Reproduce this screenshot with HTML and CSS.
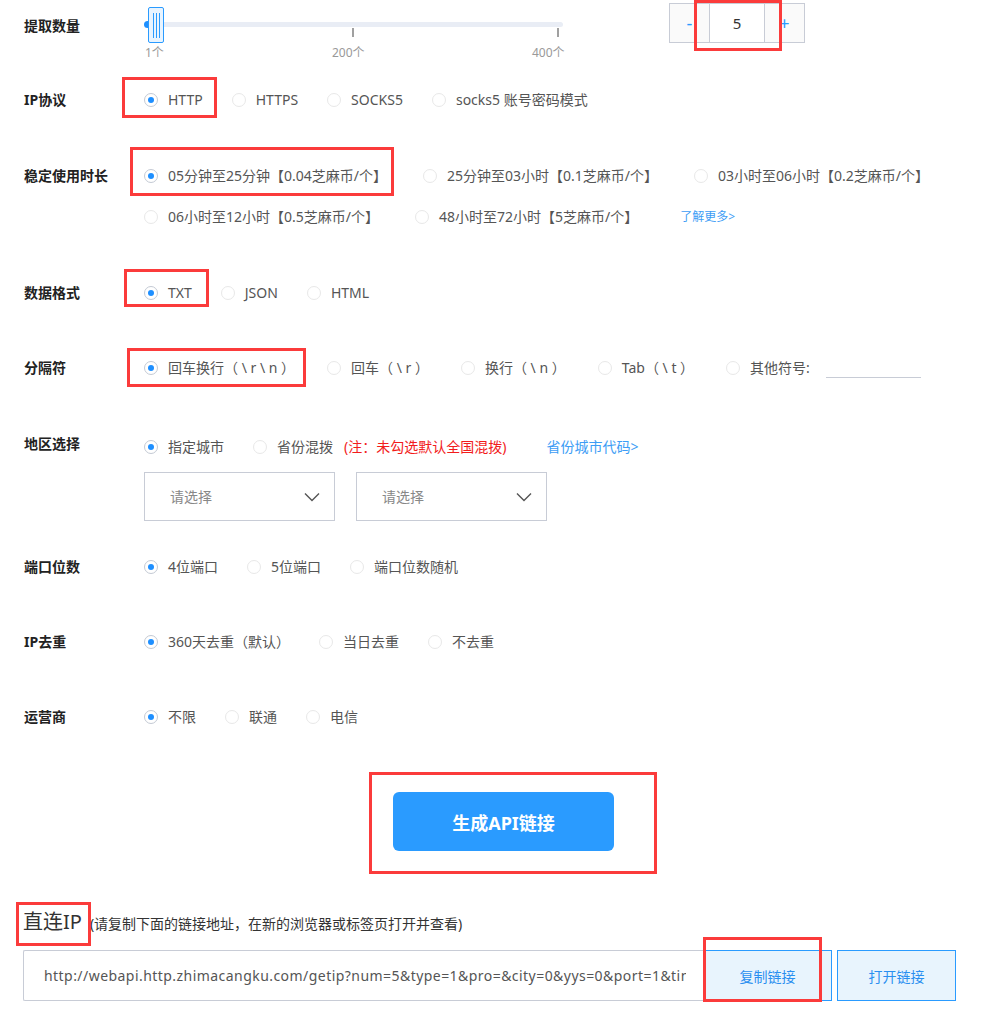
FILE: index.html
```html
<!DOCTYPE html>
<html lang="zh-CN">
<head>
<meta charset="utf-8">
<title>提取IP</title>
<link rel="stylesheet" href="styles.css">
</head>
<body>
<div class="page">

  <div class="row row-slider">
    <div class="label label-slider">提取数量</div>
    <div class="slider">
      <div class="track"></div>
      <div class="track-dot"></div>
      <div class="tick tick-200"></div>
      <div class="tick tick-400"></div>
      <div class="handle"><span></span><span></span><span></span></div>
      <div class="scale scale-1">1个</div>
      <div class="scale scale-200">200个</div>
      <div class="scale scale-400">400个</div>
    </div>
    <div class="stepper">
      <div class="step-btn">-</div>
      <div class="step-val">5</div>
      <div class="step-btn">+</div>
    </div>
  </div>

  <div class="row row-ip">
    <div class="label">IP协议</div>
    <div class="opts">
      <span class="radio on"><i class="circle"></i>HTTP</span>
      <span class="radio"><i class="circle"></i>HTTPS</span>
      <span class="radio"><i class="circle"></i>SOCKS5</span>
      <span class="radio"><i class="circle"></i>socks5 账号密码模式</span>
    </div>
  </div>

  <div class="row row-duration">
    <div class="label">稳定使用时长</div>
    <div class="opts-col">
      <div class="opts opts-wide">
        <span class="radio on"><i class="circle"></i>05分钟至25分钟【0.04芝麻币/个】</span>
        <span class="radio"><i class="circle"></i>25分钟至03小时【0.1芝麻币/个】</span>
        <span class="radio"><i class="circle"></i>03小时至06小时【0.2芝麻币/个】</span>
      </div>
      <div class="opts opts-wide">
        <span class="radio"><i class="circle"></i>06小时至12小时【0.5芝麻币/个】</span>
        <span class="radio"><i class="circle"></i>48小时至72小时【5芝麻币/个】</span>
        <a class="link link-small">了解更多&gt;</a>
      </div>
    </div>
  </div>

  <div class="row row-format">
    <div class="label">数据格式</div>
    <div class="opts">
      <span class="radio on"><i class="circle"></i>TXT</span>
      <span class="radio"><i class="circle"></i>JSON</span>
      <span class="radio"><i class="circle"></i>HTML</span>
    </div>
  </div>

  <div class="row row-sep">
    <div class="label">分隔符</div>
    <div class="opts opts-sep">
      <span class="radio on"><i class="circle"></i>回车换行（ \ r \ n ）</span>
      <span class="radio"><i class="circle"></i>回车（ \ r ）</span>
      <span class="radio"><i class="circle"></i>换行（ \ n ）</span>
      <span class="radio"><i class="circle"></i>Tab（ \ t ）</span>
      <span class="radio"><i class="circle"></i>其他符号:<span class="line-input"></span></span>
    </div>
  </div>

  <div class="row row-region">
    <div class="label">地区选择</div>
    <div class="region-body">
      <div class="opts">
        <span class="radio on"><i class="circle"></i>指定城市</span>
        <span class="radio"><i class="circle"></i>省份混拨<span class="note">(注：未勾选默认全国混拨)</span><a class="link link-code">省份城市代码&gt;</a></span>
      </div>
      <div class="selects">
        <div class="select"><span>请选择</span>
          <svg class="chev" width="16" height="10" viewBox="0 0 16 10"><polyline points="1,1.5 8,8.5 15,1.5" fill="none" stroke="#555" stroke-width="1.4"/></svg>
        </div>
        <div class="select"><span>请选择</span>
          <svg class="chev" width="16" height="10" viewBox="0 0 16 10"><polyline points="1,1.5 8,8.5 15,1.5" fill="none" stroke="#555" stroke-width="1.4"/></svg>
        </div>
      </div>
    </div>
  </div>

  <div class="row row-port">
    <div class="label">端口位数</div>
    <div class="opts">
      <span class="radio on"><i class="circle"></i>4位端口</span>
      <span class="radio"><i class="circle"></i>5位端口</span>
      <span class="radio"><i class="circle"></i>端口位数随机</span>
    </div>
  </div>

  <div class="row row-dedupe">
    <div class="label">IP去重</div>
    <div class="opts">
      <span class="radio on"><i class="circle"></i>360天去重（默认）</span>
      <span class="radio"><i class="circle"></i>当日去重</span>
      <span class="radio"><i class="circle"></i>不去重</span>
    </div>
  </div>

  <div class="row row-isp">
    <div class="label">运营商</div>
    <div class="opts">
      <span class="radio on"><i class="circle"></i>不限</span>
      <span class="radio"><i class="circle"></i>联通</span>
      <span class="radio"><i class="circle"></i>电信</span>
    </div>
  </div>

  <div class="gen-btn">生成API链接</div>

  <div class="direct-head">
    <span class="direct-title">直连IP</span><span class="direct-sub">(请复制下面的链接地址，在新的浏览器或标签页打开并查看)</span>
  </div>

  <div class="url-row">
    <input class="url-box" type="text" readonly value="http://webapi.http.zhimacangku.com/getip?num=5&amp;type=1&amp;pro=&amp;city=0&amp;yys=0&amp;port=1&amp;time=1&amp;ts=0&amp;ys=0&amp;cs=0&amp;lb=1&amp;sb=0&amp;pb=4&amp;mr=1&amp;regions=">
    <div class="url-btn url-copy">复制链接</div>
    <div class="url-btn url-open">打开链接</div>
  </div>

  <div class="mark mark-stepper"></div>
  <div class="mark mark-http"></div>
  <div class="mark mark-duration"></div>
  <div class="mark mark-txt"></div>
  <div class="mark mark-sep"></div>
  <div class="mark mark-btn"></div>
  <div class="mark mark-direct"></div>
  <div class="mark mark-copy"></div>
</div>
</body>
</html>
```

FILE: styles.css
```css
html, body {
  margin: 0;
  padding: 0;
  background: #fff;
}
body {
  font-family: "Noto Sans", "Noto Sans CJK SC", sans-serif;
  font-size: 14px;
  color: #555;
}
.page {
  position: relative;
  width: 983px;
  height: 1015px;
  overflow: hidden;
}
.row {
  display: flex;
  align-items: flex-start;
  padding-left: 24px;
}
.label {
  width: 120px;
  flex: none;
  font-weight: bold;
  color: #222;
  line-height: 20px;
}
.opts {
  display: flex;
  align-items: center;
  gap: 29px;
  line-height: 20px;
  white-space: nowrap;
}
.opts-wide { gap: 36px; }
.opts-sep { gap: 32px; }
.opts-col {
  display: flex;
  flex-direction: column;
  gap: 21px;
}
.radio {
  display: inline-flex;
  align-items: center;
  white-space: nowrap;
}
.circle {
  position: relative;
  width: 14px;
  height: 14px;
  box-sizing: border-box;
  border: 1px solid #e8e8e8;
  border-radius: 50%;
  background: #fff;
  margin-right: 10px;
  flex: none;
}
.radio.on .circle { border-color: #c4cad4; }
.radio.on .circle::after {
  content: "";
  position: absolute;
  left: 3px;
  top: 3px;
  width: 6px;
  height: 6px;
  border-radius: 50%;
  background: #1e8fff;
}
.link {
  color: #3d9df5;
  text-decoration: none;
}
.link-small { font-size: 12px; margin-left: 6px; }
.link-code { margin-left: 40px; }
.note {
  color: #f21c1c;
  margin-left: 11px;
}

/* slider row */
.row-slider { height: 62px; }
.label-slider { margin-top: 16px; }
.slider {
  position: relative;
  width: 423px;
  height: 62px;
  flex: none;
}
.track {
  position: absolute;
  left: 2px;
  top: 22px;
  width: 417px;
  height: 5px;
  border-radius: 3px;
  background: #e9edf5;
}
.track-dot {
  position: absolute;
  left: 0;
  top: 21px;
  width: 7px;
  height: 7px;
  border-radius: 50%;
  background: #1e8fff;
}
.tick {
  position: absolute;
  top: 28px;
  width: 2px;
  height: 9px;
  background: #a0a0a0;
}
.tick-200 { left: 208px; }
.tick-400 { left: 413px; }
.handle {
  position: absolute;
  left: 4px;
  top: 7px;
  width: 16px;
  height: 36px;
  box-sizing: border-box;
  border: 1px solid #2a9bff;
  border-radius: 2px;
  background: #e8f4ff;
  display: flex;
  justify-content: center;
  align-items: center;
  gap: 2px;
}
.handle span {
  width: 1px;
  height: 25px;
  background: #2a9bff;
}
.scale {
  position: absolute;
  top: 44px;
  font-size: 12px;
  line-height: 18px;
  color: #999;
}
.scale-1 { left: 1px; }
.scale-200 { left: 188px; }
.scale-400 { left: 388px; }

.stepper {
  display: flex;
  margin-left: 102px;
  margin-top: 3px;
  height: 40px;
  box-sizing: border-box;
  border: 1px solid #c8ccd6;
}
.step-btn {
  width: 39px;
  background: #fafafa;
  color: #2a9bff;
  font-size: 18px;
  display: flex;
  align-items: center;
  justify-content: center;
}
.step-val {
  width: 54px;
  border-left: 1px solid #c8ccd6;
  border-right: 1px solid #c8ccd6;
  background: #fff;
  color: #333;
  font-size: 15px;
  display: flex;
  align-items: center;
  justify-content: center;
}

/* row spacing */
.row-ip { margin-top: 28px; }
.row-duration { margin-top: 56px; }
.row-format { margin-top: 56px; }
.row-sep { margin-top: 55px; }
.row-region { margin-top: 56px; }
.row-port { margin-top: 36px; }
.row-dedupe { margin-top: 55px; }
.row-isp { margin-top: 55px; }

.line-input {
  display: inline-block;
  width: 95px;
  height: 20px;
  box-sizing: border-box;
  border-bottom: 1px solid #c8ccd6;
  margin-left: 16px;
}

/* region */
.region-body {
  display: flex;
  flex-direction: column;
  padding-top: 3px;
}
.selects {
  display: flex;
  gap: 21px;
  margin-top: 15px;
}
.select {
  width: 191px;
  height: 49px;
  box-sizing: border-box;
  border: 1px solid #c8ccd6;
  display: flex;
  align-items: center;
  justify-content: space-between;
  padding: 0 14px 0 25px;
  color: #888;
  line-height: 20px;
}
.chev { display: block; }

/* generate button */
.gen-btn {
  margin-top: 65px;
  margin-left: 393px;
  width: 221px;
  height: 59px;
  border-radius: 6px;
  background: #2a9bff;
  color: #fff;
  font-size: 18px;
  font-weight: bold;
  display: flex;
  align-items: center;
  justify-content: center;
}

/* direct ip */
.direct-head {
  margin-top: 57px;
  padding-left: 23px;
  display: flex;
  align-items: baseline;
  line-height: 28px;
  color: #333;
}
.direct-title { font-size: 20px; }
.direct-sub { font-size: 14px; margin-left: 8px; }

.url-row {
  display: flex;
  margin-top: 12px;
  padding-left: 23px;
}
.url-box {
  width: 680px;
  height: 51px;
  margin: 0;
  box-sizing: border-box;
  border: 1px solid #c8ccd6;
  border-right: none;
  border-radius: 2px 0 0 2px;
  padding: 0 17px 0 20px;
  font-family: "Noto Sans", "Noto Sans CJK SC", sans-serif;
  font-size: 14px;
  letter-spacing: 0.45px;
  color: #555;
  background: #fff;
  outline: none;
}
.url-btn {
  height: 51px;
  box-sizing: border-box;
  border: 1px solid #2a9bff;
  background: #e8f4fd;
  color: #2a8ff0;
  display: flex;
  align-items: center;
  justify-content: center;
}
.url-copy { width: 129px; }
.url-open { width: 119px; margin-left: 5px; }

/* red annotation boxes */
.mark {
  position: absolute;
  box-sizing: border-box;
  border: 3px solid #fb3b3b;
  pointer-events: none;
}
.mark-stepper { left: 694px; top: 0; width: 88px; height: 51px; }
.mark-http { left: 122px; top: 77px; width: 95px; height: 41px; }
.mark-duration { left: 130px; top: 147px; width: 264px; height: 49px; }
.mark-txt { left: 124px; top: 269px; width: 85px; height: 38px; }
.mark-sep { left: 127px; top: 348px; width: 179px; height: 39px; }
.mark-btn { left: 369px; top: 772px; width: 288px; height: 102px; }
.mark-direct { left: 16px; top: 902px; width: 75px; height: 44px; }
.mark-copy { left: 703px; top: 937px; width: 119px; height: 65px; }
```
